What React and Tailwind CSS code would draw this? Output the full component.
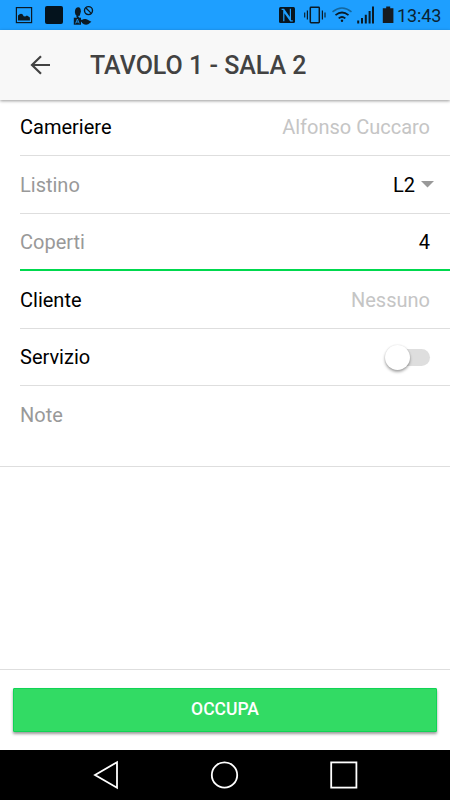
import React from 'react';

function StatusBar() {
  return (
    <header className="flex h-[30px] shrink-0 items-center bg-[#1e9fff] text-[#0b1a24]">
      <svg className="ml-[15px] h-[30px] w-[18px]" viewBox="0 0 18 30" fill="none">
        <rect x="1.4" y="7.6" width="15.2" height="15" stroke="currentColor" strokeWidth="1.2" />
        <path d="M3 20.5v-5l1.6-1.2 1.4-.6 1.5.5 1.2 2 1.5.4 1.7-1 1.6 1 1.4 1v2.9z" fill="currentColor" />
      </svg>
      <div className="ml-3 h-[18px] w-[18px] rounded-[2px] bg-[#04131d]" />
      <svg className="ml-[10px] h-[30px] w-[22px]" viewBox="0 0 22 30" fill="none">
        <path d="M4.9 7.3C2.9 7.7 1.8 9.5 1.9 12c.1 2 .9 3.7 2.4 4l2.4-.3 1.2-4.2C7.8 9 7 7 4.9 7.3z" fill="currentColor" />
        <path d="M8.8 20c1.5-1.2 3.6-1 5.3-.6l4.3 2.3-3.2 2.5c-2.2 1-4.4.4-6.4-1.4z" fill="currentColor" />
        <path d="M4 15.5c.8 3 2.9 5 6 6.2" stroke="currentColor" strokeWidth="1.8" />
        <rect x="0.8" y="17.7" width="7.2" height="7" fill="currentColor" />
        <path d="M2.6 23.4L4.4 19l1.8 4.4M3.2 22h2.4" stroke="#1e9fff" strokeWidth="0.8" />
        <circle cx="15.5" cy="10.6" r="4" stroke="currentColor" strokeWidth="1.4" />
        <path d="M12.7 7.8l5.6 5.6" stroke="currentColor" strokeWidth="1.3" />
      </svg>
      <div className="flex-1" />
      <svg className="h-[30px] w-[118px] shrink-0" viewBox="278 0 118 30" fill="none">
        <rect x="279" y="7" width="16" height="16" rx="1.5" fill="#081620" />
        <path d="M281.6 9.4h2.2l6.6 9.4V8.8M292.8 20.8h-2.2l-6.8-9.4v9.8" stroke="#1e9fff" strokeWidth="1.2" />
        <rect x="310.3" y="7.2" width="9" height="15.6" rx="0.7" stroke="currentColor" strokeWidth="1.5" />
        <path d="M307.4 10.5v9M322.4 10.5v9" stroke="currentColor" strokeWidth="1.2" />
        <path d="M304.7 12.5v5M325 12.5v5" stroke="currentColor" strokeWidth="1.1" />
        <path d="M332.5 11.8q9.5-7.6 19 0" stroke="#14679f" strokeWidth="1.6" />
        <path d="M335.5 15.1q6.5-5.2 13 0M338.7 18.4q3.3-2.8 6.6 0" stroke="currentColor" strokeWidth="1.8" />
        <circle cx="342" cy="20.8" r="1.2" fill="currentColor" />
        <path d="M358.2 20.4v3.1M362 18v5.5M365.8 14.7v8.8M369.6 11v12.5M373 6.5v17" stroke="currentColor" strokeWidth="2" />
        <path d="M386.2 6.6h4v1.7h3.2v14.8h-10.6V8.3h3.4z" fill="#161b20" />
      </svg>
      <time className="ml-[1px] w-[53px] pt-[2px] text-[18px] leading-[30px] whitespace-nowrap text-[#0b2332] tracking-[-0.1px]">13:43</time>
    </header>
  );
}

function Row({ label, muted, focused, children }) {
  return (
    <div className="h-[57.5px] shrink-0 pl-5">
      <div
        className={
          'flex h-full items-center justify-between pr-5 pt-[1.2px] ' +
          (focused ? 'border-b-2 border-[#00d94e]' : 'border-b border-[#dedede]')
        }
      >
        <span className={muted ? 'text-[#999]' : 'text-black'}>{label}</span>
        {children}
      </div>
    </div>
  );
}

export default function App() {
  return (
    <div className="flex h-[800px] w-[450px] flex-col overflow-hidden bg-white font-['Roboto',sans-serif] text-[20px] leading-6">
      <StatusBar />
      <div className="z-10 flex h-[70px] shrink-0 items-center bg-[#f8f8f8] shadow-[0_1px_3px_rgba(0,0,0,0.4)]">
        <svg className="ml-[30px] h-5 w-5" viewBox="0 0 20 20" fill="none" stroke="#424242" strokeWidth="2.2">
          <path d="M20 10H2M11 1.2L2 10l9 8.8" />
        </svg>
        <h1 className="ml-10 pt-[2px] text-[25px] leading-[30px] font-medium text-[#424242]">TAVOLO 1 - SALA 2</h1>
      </div>
      <main className="-mt-[1.5px] flex shrink-0 flex-col">
        <Row label="Cameriere">
          <span className="text-[#c5c5c5]">Alfonso Cuccaro</span>
        </Row>
        <Row label="Listino" muted>
          <span className="-mr-1 flex items-center gap-[6px]">
            L2
            <svg className="h-[7px] w-[13px]" viewBox="0 0 13 7" fill="#999">
              <path d="M0 0h13L6.5 6.5z" />
            </svg>
          </span>
        </Row>
        <Row label="Coperti" muted focused>
          <span>4</span>
        </Row>
        <Row label="Cliente">
          <span className="text-[#c5c5c5]">Nessuno</span>
        </Row>
        <Row label="Servizio">
          <div className="flex h-[17px] w-[43px] items-center rounded-full bg-[#dedede]">
            <div className="-ml-[2px] h-[25px] w-[25px] shrink-0 rounded-full bg-white shadow-[0_2px_3px_rgba(0,0,0,0.35),0_0_2px_rgba(0,0,0,0.12)]" />
          </div>
        </Row>
        <div className="h-[81px] border-b border-[#dedede] pt-[17px] pl-5 text-[#999]">Note</div>
      </main>
      <div className="flex-1" />
      <footer className="h-[81px] shrink-0 border-t border-[#dedede] px-[13px] pt-[18px]">
        <button className="block h-11 w-full rounded-[1px] border border-[#10d455] bg-[#32db64] pb-[2px] text-[17.5px] leading-[40px] font-medium text-white shadow-[0_2px_3px_rgba(0,0,0,0.4)]">
          OCCUPA
        </button>
      </footer>
      <nav className="flex h-[50px] shrink-0 items-center bg-black">
        <svg className="h-[50px] w-[450px]" viewBox="0 0 450 50" fill="none" stroke="#fff" strokeWidth="1.8">
          <path d="M95 25l22-12.8v25.6z" />
          <circle cx="224.5" cy="25" r="12.7" />
          <rect x="331.2" y="12.4" width="25.2" height="25.2" />
        </svg>
      </nav>
    </div>
  );
}
